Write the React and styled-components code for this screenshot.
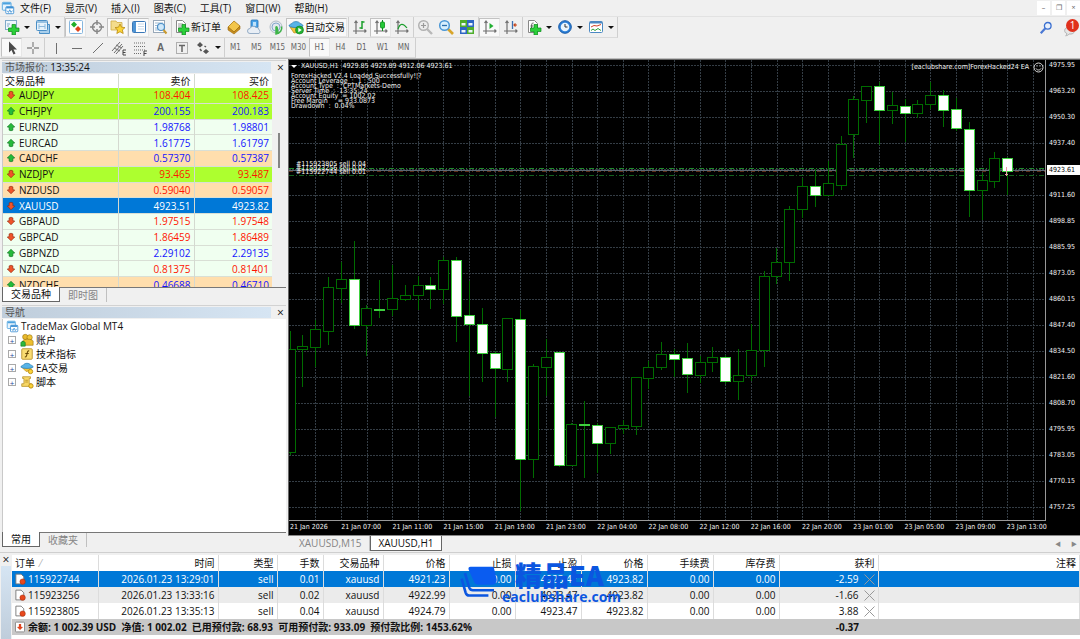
import React, { useState } from 'react';
import styled, { createGlobalStyle, css } from 'styled-components';

const GlobalStyle = createGlobalStyle`
    * {
        box-sizing: border-box;
    }
    body {
        margin: 0;
        background: #f0f0f0;
        color: #111;
        font-family: 'Open Sans', 'Noto Sans CJK SC', sans-serif;
        font-size: 10px;
        line-height: 14px;
    }
    button {
        font: inherit;
        color: inherit;
        border: 0;
        padding: 0;
        margin: 0;
        background: none;
    }
    table {
        border-collapse: collapse;
        table-layout: fixed;
        width: 100%;
    }
    svg {
        display: block;
    }
`;

const GREEN = '#1fae2c';
const RED = '#e0431c';
const GREY = '#6f6f6f';

/* ---------- data ---------- */

const MENU = ['文件(F)', '显示(V)', '插入(I)', '图表(C)', '工具(T)', '窗口(W)', '帮助(H)'];
const PERIODS = ['M1', 'M5', 'M15', 'M30', 'H1', 'H4', 'D1', 'W1', 'MN'];

const QUOTES = [
    { name: 'AUDJPY', bid: '108.404', ask: '108.425', up: false, color: 'red', tone: 'lime' },
    { name: 'CHFJPY', bid: '200.155', ask: '200.183', up: true, color: 'blue', tone: 'lime' },
    { name: 'EURNZD', bid: '1.98768', ask: '1.98801', up: true, color: 'blue', tone: 'mint' },
    { name: 'EURCAD', bid: '1.61775', ask: '1.61797', up: true, color: 'blue', tone: 'mint' },
    { name: 'CADCHF', bid: '0.57370', ask: '0.57387', up: true, color: 'blue', tone: 'peach' },
    { name: 'NZDJPY', bid: '93.465', ask: '93.487', up: false, color: 'red', tone: 'lime' },
    { name: 'NZDUSD', bid: '0.59040', ask: '0.59057', up: false, color: 'red', tone: 'peach' },
    { name: 'XAUUSD', bid: '4923.51', ask: '4923.82', up: false, color: 'white', tone: 'active' },
    { name: 'GBPAUD', bid: '1.97515', ask: '1.97548', up: false, color: 'red', tone: 'mint' },
    { name: 'GBPCAD', bid: '1.86459', ask: '1.86489', up: false, color: 'red', tone: 'mint' },
    { name: 'GBPNZD', bid: '2.29102', ask: '2.29135', up: true, color: 'blue', tone: 'mint' },
    { name: 'NZDCAD', bid: '0.81375', ask: '0.81401', up: false, color: 'red', tone: 'mint' },
    { name: 'NZDCHF', bid: '0.46688', ask: '0.46710', up: true, color: 'blue', tone: 'peach' },
];

const TONES = { lime: '#adff2f', mint: '#f0fff0', peach: '#ffdead', active: '#0078d7' };
const PRICE_COLORS = { red: '#ff1500', blue: '#1414ff', white: '#fff' };

const NAV = [
    { label: '账户', icon: 'accounts' },
    { label: '技术指标', icon: 'fx' },
    { label: 'EA交易', icon: 'expert' },
    { label: '脚本', icon: 'script' },
];

const PRICES = [
    '4975.95', '4963.20', '4950.30', '4937.40', '4923.61', '4911.60', '4898.85', '4885.95', '4873.05',
    '4860.15', '4847.40', '4834.50', '4821.60', '4808.70', '4795.95', '4783.05', '4770.15', '4757.25',
];

const TIMES = [
    '21 Jan 2026', '21 Jan 07:00', '21 Jan 11:00', '21 Jan 15:00', '21 Jan 19:00', '21 Jan 23:00',
    '22 Jan 04:00', '22 Jan 08:00', '22 Jan 12:00', '22 Jan 16:00', '22 Jan 20:00', '23 Jan 01:00',
    '23 Jan 05:00', '23 Jan 09:00', '23 Jan 13:00',
];

const COMMENTS = [
    'ForexHacked V2.4 Loaded Successfully!¦?',
    'Account Leverage  :  1 : 500',
    'Account Type  :  CPTMarkets-Demo',
    'Server Time  :  13:35:24',
    'Account Equity  = 1002.02',
    'Free Margin     = 933.0873',
    'Drawdown  :  0.04%',
];

// high, body top, body bottom, low, down candle
const CANDLES = [
    [271, 289, 392, 394], [275, 286, 289, 326], [260, 269, 287, 306], [217, 227, 271, 284],
    [202, 219, 228, 242], [181, 219, 265, 268, 1], [245, 248, 265, 295], [220, 249, 250, 257, 1],
    [205, 238, 249, 255], [225, 235, 239, 240], [216, 225, 235, 249], [217, 225, 229, 248, 1],
    [197, 200, 229, 243], [197, 200, 256, 281, 1], [221, 255, 264, 335, 1], [248, 264, 293, 321, 1],
    [291, 293, 308, 356, 1], [258, 258, 309, 321], [250, 259, 399, 450, 1], [304, 306, 399, 417],
    [279, 297, 307, 335], [292, 292, 405, 406, 1], [363, 364, 405, 405], [341, 364, 365, 417, 1],
    [363, 365, 383, 412, 1], [367, 367, 383, 393], [360, 365, 368, 373], [317, 317, 366, 374],
    [301, 307, 318, 328], [282, 294, 307, 309], [289, 294, 299, 316, 1], [283, 298, 314, 332, 1],
    [296, 302, 315, 322], [287, 297, 302, 311], [295, 297, 321, 323, 1], [289, 315, 321, 339],
    [264, 290, 315, 320], [211, 216, 290, 306], [188, 202, 216, 223], [146, 149, 202, 220],
    [118, 126, 149, 157], [109, 126, 135, 146, 1], [101, 123, 135, 135], [76, 84, 125, 129],
    [36, 39, 74, 97], [26, 26, 40, 62], [22, 26, 50, 84, 1], [32, 45, 50, 63],
    [39, 46, 53, 81, 1], [40, 44, 53, 57], [22, 35, 44, 48], [30, 35, 50, 66, 1],
    [38, 49, 68, 70, 1], [62, 69, 130, 156, 1], [113, 120, 130, 159], [92, 98, 121, 127],
    [97, 98, 111, 134, 1],
];

const ORDER_COLS = ['订单', '时间', '类型', '手数', '交易品种', '价格', '止损', '止盈', '价格', '手续费', '库存费', '获利', '注释'];
const ORDER_WIDTHS = [86, 120, 59, 46, 60, 66, 66, 66, 66, 66, 66, 99];
const ORDERS = [
    ['115922744', '2026.01.23 13:29:01', 'sell', '0.01', 'xauusd', '4921.23', '0.00', '4923.47', '4923.82', '0.00', '0.00', '-2.59'],
    ['115923256', '2026.01.23 13:33:16', 'sell', '0.02', 'xauusd', '4922.99', '0.00', '4923.47', '4923.82', '0.00', '0.00', '-1.66'],
    ['115923805', '2026.01.23 13:35:13', 'sell', '0.04', 'xauusd', '4924.79', '0.00', '4923.47', '4923.82', '0.00', '0.00', '3.88'],
];

/* ---------- icons ---------- */

const axes = <path d="M4 2v13M1 12h13M2.500 4L4 2l1.500 2M12.500 10.500L14 12l-1.500 1.500" fill="none" stroke="#707070" strokeWidth="1.200" />;
const plus = <path d="M8 5.500h3.500v3.500h3.500v3.500h-3.500V16H8v-3.500H4.500V9H8z" fill="#2ccf3a" stroke="#0a8a1a" strokeWidth=".7" />;

const ICONS = {
    app: (
        <>
            <rect x="1.500" y="1.500" width="10" height="9" rx="1" fill="#e8f4fd" stroke="#4da3df" />
            <path d="M2 3h9" stroke="#4da3df" strokeWidth="2" />
            <rect x="5.500" y="6.500" width="9" height="8" rx="1" fill="#fff" stroke="#3b8fd4" />
            <path d="M6 7.500h8" stroke="#3b8fd4" strokeWidth="2" />
            <path d="M7 11l1.500 2 1.500-3 1.500 3 1.500-2" fill="none" stroke="#3b8fd4" />
        </>
    ),
    newChart: (
        <>
            <rect x="1.500" y="1.500" width="11" height="9" fill="#eef6fc" stroke="#7fa9c8" />
            <path d="M3 5h3M3 7h2" stroke="#7fa9c8" />
            {plus}
        </>
    ),
    profiles: (
        <>
            <path d="M4.500 12.500v2h10v-9h-2" fill="#a9cfec" stroke="#4a8fc6" />
            <rect x="1.500" y="1.500" width="11" height="10" rx="1" fill="#e6f2fb" stroke="#4a8fc6" />
            <path d="M2 3h10" stroke="#4a8fc6" />
            <path d="M4 5v5M4 7.500h6M10 5v5" fill="none" stroke="#8cb9dc" />
        </>
    ),
    watch: (
        <>
            <rect x="1.500" y="1.500" width="13" height="13" rx="1" fill="#fff" stroke="#86b6de" />
            <path d="M6 2.500l3 3-3 3-3-3z" fill={GREEN} />
            <path d="M10 7l3 3-3 3-3-3z" fill={RED} />
        </>
    ),
    target: (
        <>
            <circle cx="8" cy="8" r="4.500" fill="none" stroke="#888" strokeWidth="1.500" />
            <path d="M8 1v5M8 10v5M1 8h5M10 8h5" stroke="#888" strokeWidth="1.500" />
        </>
    ),
    star: (
        <>
            <path d="M1 2h5l1 1.500h5V11H1z" fill="#f4dc8c" stroke="#d0ac45" strokeWidth=".8" />
            <path d="M10 5l1.500 3.200 3.500.4-2.600 2.300.8 3.600L10 12.700l-3.200 1.800.8-3.600L5 8.600l3.500-.4z" fill="#fbd437" stroke="#b98a12" strokeWidth=".8" />
        </>
    ),
    panel: (
        <>
            <rect x="1.500" y="2.500" width="13" height="11" rx="1" fill="#fff" stroke="#3a78b8" />
            <path d="M2 3h3v10H2z" fill="#4f94d4" />
            <path d="M7 5h6M7 7.500h6M7 10h6" stroke="#c5d8ea" />
        </>
    ),
    tester: (
        <>
            <rect x="1.500" y="1.500" width="11" height="12" fill="#fff" stroke="#98a8b8" />
            <path d="M3 4h8M3 6.500h3M3 9h2M3 11h3" stroke="#9db9d1" />
            <circle cx="9" cy="8" r="3.500" fill="#cfe8fa" stroke="#4c8fc7" strokeWidth="1.200" />
            <path d="M11.500 11l3 3.500" stroke="#c99a2e" strokeWidth="2" />
        </>
    ),
    newOrder: (
        <>
            <path d="M2.500 1.500h6l3 3v9h-9z" fill="#fff" stroke="#888" />
            <path d="M4 5h5M4 7h6M4 9h3" stroke="#999" />
            {plus}
        </>
    ),
    gold: (
        <>
            <path d="M2 8l6-6 6 5-6 6z" fill="#f3c64b" stroke="#b07c14" strokeWidth=".8" />
            <path d="M2 8l6 5 6-6v3l-6 5-6-4z" fill="#c98f1c" stroke="#9a6a10" strokeWidth=".6" />
        </>
    ),
    cloud: (
        <>
            <rect x="4" y="1" width="7" height="8" rx="1" fill="#4aa3e8" stroke="#2470b4" strokeWidth=".8" />
            <path d="M6 3h3v4H6z" fill="#bfe2fb" />
            <path d="M3 14.500a2.500 2.500 0 010-5 3.500 3.500 0 016-1 2.500 2.500 0 013 2.500 2 2 0 010 3.500z" fill="#e8eef5" stroke="#7f9cba" strokeWidth=".8" />
        </>
    ),
    signal: (
        <>
            <circle cx="8" cy="8" r="6" fill="#e2e8ee" stroke="#b3bdc8" />
            <circle cx="8" cy="8" r="4" fill="none" stroke="#86a8cc" />
            <path d="M8 7a2 2 0 012 2l1 6H8z" fill="#3fb54a" />
            <path d="M8 7.500V15c4-.500 6.500-4 5.500-7.500" fill="none" stroke="#3fb54a" strokeWidth="1.500" />
        </>
    ),
    auto: (
        <>
            <path d="M2 8l4 6 6-1 2-5z" fill="#f2c33c" stroke="#b98a12" strokeWidth=".7" />
            <path d="M1 7c0-1.500 2-2 3-2.500C5 2 11 2 12 4.500c1.500.500 3 1 3 2.500-3 2-11 2-14 0z" fill="#58b4e8" stroke="#2d7fb5" strokeWidth=".8" />
            <circle cx="11.500" cy="11" r="4" fill="#23b233" stroke="#0d7a1b" strokeWidth=".6" />
            <path d="M10.300 8.800l3.500 2.200-3.500 2.200z" fill="#fff" />
        </>
    ),
    bars: (
        <>
            {axes}
            <path d="M10 2v8M10 3h2.500M7.500 9H10" stroke="#1b9e2c" strokeWidth="1.500" />
        </>
    ),
    candle: (
        <>
            {axes}
            <path d="M9.500 1v11" stroke="#0b8a1b" />
            <rect x="7.500" y="3" width="4" height="6" rx="1" fill="#25c937" stroke="#0b8a1b" strokeWidth=".8" />
        </>
    ),
    line: (
        <>
            {axes}
            <path d="M4 10c2-6 5-6 9-1" fill="none" stroke="#1b9e2c" strokeWidth="1.200" />
        </>
    ),
    zoomIn: (
        <>
            <circle cx="6.500" cy="6.500" r="4.800" fill="#ececec" stroke="#b0b0b0" strokeWidth="1.400" />
            <path d="M4 6.500h5M6.500 4v5" stroke="#999" strokeWidth="1.200" />
            <path d="M10 10l5 5" stroke="#b8b8b8" strokeWidth="2.400" />
        </>
    ),
    zoomOut: (
        <>
            <path d="M10 10l5 5" stroke="#d8a52a" strokeWidth="2.600" />
            <circle cx="6.500" cy="6.500" r="4.800" fill="#d7effd" stroke="#4a97d6" strokeWidth="1.500" />
            <path d="M4 6.500h5" stroke="#2a6fae" strokeWidth="1.300" />
        </>
    ),
    tile: (
        <>
            <rect x="1" y="1" width="7" height="7" fill="#4fae2b" />
            <rect x="8" y="1" width="7" height="7" fill="#2f66c4" />
            <rect x="1" y="8" width="7" height="7" fill="#2f66c4" />
            <rect x="8" y="8" width="7" height="7" fill="#4fae2b" />
            <path d="M2.500 4h4v2.500h-4zM9.500 4h4v2.500h-4zM2.500 11h4v2.500h-4zM9.500 11h4v2.500h-4z" fill="#eef6fb" />
        </>
    ),
    scroll: (
        <>
            {axes}
            <path d="M7.500 4l4 3-4 3z" fill="#22b032" />
        </>
    ),
    shift: (
        <>
            {axes}
            <path d="M9.500 2v8" stroke="#3b6fb0" strokeWidth="1.300" />
            <path d="M14 6h-3M12.500 4.500L11 6l1.500 1.500" fill="none" stroke="#c5481f" strokeWidth="1.200" />
        </>
    ),
    indicators: (
        <>
            <path d="M2.500 1.500h6l3 3v9h-9z" fill="#fff" stroke="#888" />
            <path d="M7.500 4c-2 0-2 1-2 7M4.500 7H7" fill="none" stroke="#555" />
            {plus}
        </>
    ),
    clock: (
        <>
            <circle cx="8" cy="8" r="6.300" fill="#2b7fd8" stroke="#1a5ba6" />
            <circle cx="8" cy="8" r="4.300" fill="#eaf5fd" />
            <path d="M8 5v3h2.500" fill="none" stroke="#333" />
        </>
    ),
    template: (
        <>
            <rect x="1.500" y="2.500" width="13" height="11" rx="1" fill="#fff" stroke="#4b88c2" />
            <path d="M2 3.500h12" stroke="#4b88c2" strokeWidth="2" />
            <path d="M3 8l3-1.500 3 .500 4-1.500" fill="none" stroke="#d0432a" />
            <path d="M3 11.500l2-1.500 2 1.500 3-2 3 2" fill="none" stroke="#2ea33b" />
        </>
    ),
    cursor: <path d="M5 1.500v11l2.500-2.500 2 4.500 2-1-2-4h3.500z" fill="#4a4a4a" />,
    cross: <path d="M8 2v5M8 9v5M2 8h5M9 8h5" stroke="#8a8a8a" strokeWidth="1.300" />,
    vline: <path d="M8.500 3v11" stroke={GREY} />,
    hline: <path d="M3 8.500h10" stroke={GREY} />,
    trend: <path d="M3 13L13 3" stroke={GREY} />,
    channel: (
        <>
            <path d="M1 11L9 2M3 13l8-9M5 14l7-8M3 8l6 3M5 5l6 3" stroke={GREY} fill="none" />
            <path d="M15 10h-3v5h3M12 12.500h2.500" stroke="#444" fill="none" />
        </>
    ),
    fibo: (
        <>
            <path d="M2 3h12M2 6.500h12M2 10h12M2 13.500h7" stroke={GREY} strokeDasharray="1 1" />
            <path d="M15 11h-3v5M12 13.500h2.500" stroke="#444" fill="none" />
        </>
    ),
    label: (
        <>
            <rect x="2.500" y="2.500" width="11" height="11" fill="none" stroke={GREY} strokeDasharray="1 1" />
            <path d="M5 5.500h6M8 5.500V12" stroke="#666" strokeWidth="1.500" />
        </>
    ),
    arrows: (
        <>
            <path d="M5 2l3 3-3 2.500L2 5zM11 9l3 2.500-3 2.500-3-2.500z" fill="#555" />
            <path d="M5 9l1.500 2M9.500 6L11 7" stroke="#555" strokeWidth="1.500" />
        </>
    ),
    search: (
        <>
            <circle cx="10" cy="5.500" r="3.800" fill="#e8f0fc" stroke="#3a6fd0" strokeWidth="1.500" />
            <path d="M7 8.500l-5 5.500" stroke="#4a78d4" strokeWidth="2.500" />
        </>
    ),
    chat: <path d="M3 14.500c1-.500 1.500-1.500 1.500-2.500C1 11 1 6 5 5c5-1 8 1 8 4s-3 4-6 3.500c-1 1.500-2.500 2-4 2z" fill="#e6e6e6" stroke="#a8a8a8" />,
    accounts: (
        <>
            <circle cx="6" cy="4.500" r="3" fill="#e9b92c" stroke="#9a7410" strokeWidth=".7" />
            <circle cx="11" cy="5" r="3" fill="#f0c638" stroke="#9a7410" strokeWidth=".7" />
            <path d="M3 14V9c2-2.500 10-2.500 12 0v5z" fill="#edbf2f" stroke="#9a7410" strokeWidth=".7" />
            <path d="M1 15v-4c1-2 4-2 5 0v4z" fill="#2db83b" stroke="#14771f" strokeWidth=".7" />
        </>
    ),
    fx: (
        <>
            <rect x="2" y="2" width="12" height="12" rx="1" fill="#f9dc72" stroke="#b8912a" />
            <path d="M10.500 4.500C8 4 8.500 7 7.500 10c-.400 1.500-1 1.500-2 1.500M6 7.500h4" fill="none" stroke="#6b4b08" strokeWidth="1.200" />
        </>
    ),
    expert: (
        <>
            <path d="M3 8l4 4 5-1 1-4z" fill="#f2c33c" stroke="#b98a12" strokeWidth=".7" />
            <path d="M1 7c0-1.500 2-2 3-2.500C5 2 11 2 12 4.500c1.500.500 3 1 3 2.500-3 2-11 2-14 0z" fill="#58b4e8" stroke="#2d7fb5" strokeWidth=".8" />
            <circle cx="12" cy="12" r="2.500" fill="#fbd437" stroke="#b98a12" />
        </>
    ),
    script: (
        <>
            <path d="M3 2h9v2h-1.500v6H13v3H2v-3h2.500V4H3z" fill="#f7d766" stroke="#b8912a" strokeWidth=".9" />
            <path d="M6 6h3M6 8h3" stroke="#b8912a" />
            <circle cx="12.500" cy="12.500" r="2.500" fill="#fbd437" stroke="#b98a12" />
        </>
    ),
    up: <path d="M8 2l6 6-3 .500v4.500L8 14l-3-1V8.500L2 8z" fill="#25bb3a" stroke="#0c6b1b" />,
    down: <path d="M8 14L2 8l3-.500V3l3-1 3 1v4.500l3 .500z" fill="#ef5429" stroke="#8d2408" />,
    order: (
        <>
            <path d="M2.500 1.500h7l3.500 3.500v9.500H2.500z" fill="#fff" stroke="#777" strokeWidth="1.200" />
            <circle cx="11.500" cy="11.500" r="3.600" fill="#e8481d" stroke="#a02c0c" strokeWidth=".7" />
        </>
    ),
    balance: (
        <>
            <rect x="2" y="1.500" width="12" height="13" rx="1" fill="#fff" stroke="#888" strokeWidth="1.200" />
            <path d="M8 12L4 8l2.500-.500V4h3v3.500L12 8z" fill={RED} />
        </>
    ),
};

const Icon = ({ name, size = 16 }) => (
    <svg width={size} height={size} viewBox="0 0 16 16" aria-hidden="true">
        {ICONS[name]}
    </svg>
);

/* ---------- shell ---------- */

const Shell = styled.div`
    min-height: 100vh;
    display: flex;
    flex-direction: column;
    overflow: hidden;
`;

const MenuBar = styled.nav`
    display: flex;
    align-items: center;
    height: 17px;
    padding-left: 1px;
    border-bottom: 1px solid #e2e2e2;
`;

const MenuItem = styled.button`
    padding: 0 7px;
    line-height: 16px;
    white-space: nowrap;
    &:first-of-type {
        padding-left: 5px;
    }
`;

const WindowButtons = styled.div`
    display: flex;
    gap: 2px;
    margin-left: auto;
`;

const WindowButton = styled.button`
    width: 13px;
    height: 14px;
    background: #fff;
    color: #666;
    font-size: 7px;
    line-height: 14px;
`;

const ToolRow = styled.div`
    display: flex;
    height: ${(p) => (p.$last ? 20 : 21)}px;
    padding-left: 1px;
`;

const ToolGroup = styled.div`
    display: flex;
    align-items: center;
    padding-right: 1px;
    border-right: 1px solid #cfcfcf;
    border-bottom: 1px solid #dadada;
`;

const ToolButton = styled.button`
    display: flex;
    align-items: center;
    justify-content: center;
    gap: 1px;
    min-width: ${(p) => (p.$wide ? 31 : 21)}px;
    height: 19px;
    padding: 0 1px;
    white-space: nowrap;
    border: 1px solid transparent;
    ${(p) =>
        p.$pressed &&
        css`
            background: #f9f9f9;
            border-color: #c2c2c2 #e6e6e6 #e6e6e6 #c2c2c2;
        `}
`;

const PeriodButton = styled(ToolButton)`
    padding: 0;
    color: #666;
    font-family: 'DejaVu Sans Condensed', 'DejaVu Sans', sans-serif;
    font-size: 8px;
`;

const TextTool = styled.span`
    color: #666;
    font-weight: 700;
    font-family: 'Liberation Sans', sans-serif;
`;

const Caret = styled.span`
    margin-left: 3px;
    border: 3px solid transparent;
    border-top-color: #111;
    border-bottom: 0;
`;

const RightTools = styled.div`
    display: flex;
    align-items: center;
    gap: 10px;
    margin-left: auto;
    padding-right: 3px;
`;

const Bell = styled.button`
    position: relative;
    padding-top: 4px;
`;

const Badge = styled.span`
    position: absolute;
    top: 0;
    right: -2px;
    width: 13px;
    height: 13px;
    border-radius: 50%;
    background: #e0301c;
    color: #fff;
    line-height: 13px;
    text-align: center;
`;

const Workspace = styled.main`
    flex: 1;
    display: grid;
    grid-template-columns: 288px 1fr;
    border-top: 1px solid #bdbdbd;
`;

/* ---------- side panels ---------- */

const Side = styled.aside`
    display: flex;
    flex-direction: column;
    gap: 2px;
    padding: 1px 2px 4px;
`;

const Panel = styled.section`
    display: flex;
    flex-direction: column;
    flex: ${(p) => (p.$grow ? 1 : 'none')};
    border-top: 1px solid #d2d2d2;
    padding-top: 1px;
`;

const PanelTitle = styled.header`
    display: flex;
    justify-content: space-between;
    height: 12px;
    padding-right: 2px;
    line-height: 11px;
`;

const PanelName = styled.h2`
    flex: 1;
    margin: 0 6px 1px 0;
    padding-left: 3px;
    background: linear-gradient(90deg, #bfcddb, #d6e5f3);
    color: #555;
    font-size: 10px;
    font-weight: 400;
    time {
        color: #111;
    }
`;

const CloseButton = styled.button`
    font-size: 12px;
    line-height: 10px;
    width: 7px;
`;

const QuoteArea = styled.div`
    display: flex;
    height: 214px;
    overflow: hidden;
    border-left: 1px solid #c9c9c9;
    border-bottom: 1px solid #777;
`;

const QuoteTable = styled.table`
    width: calc(100% - 14px);
    height: 219px;
    th,
    td {
        padding: 0 3px;
        line-height: 14px;
        text-align: right;
        font-weight: 400;
        border-right: 1px solid #d4d9d0;
    }
    th {
        background: #fff;
    }
    th:first-child {
        text-align: left;
        padding-left: 2px;
    }
    th:last-child,
    td:last-child {
        border-right: 0;
    }
`;

const QuoteRow = styled.tr`
    background: ${(p) => TONES[p.$tone]};
    border-bottom: 1px solid #d9dfd5;
    color: ${(p) => PRICE_COLORS[p.$color]};
`;

const Symbol = styled.div`
    display: flex;
    align-items: center;
    gap: 3px;
    color: ${(p) => (p.$active ? '#fff' : '#111')};
`;

const ScrollTrack = styled.div`
    flex: 1;
    padding: 59px 6px 0;
`;

const ScrollThumb = styled.div`
    width: 2px;
    height: 35px;
    background: #858585;
`;

const Tabs = styled.div`
    display: flex;
    height: 15px;
`;

const Tab = styled.button`
    padding: 0 8px;
    height: 14px;
    line-height: 13px;
    color: ${(p) => (p.$active ? '#111' : '#858585')};
    ${(p) =>
        p.$active
            ? css`
                  margin-top: -1px;
                  height: 15px;
                  background: #fff;
                  border: 1px solid #666;
                  border-top: 0;
              `
            : css`
                  border-right: 1px solid #c0c0c0;
              `}
`;

const Tree = styled.ul`
    flex: 1;
    margin: 0;
    padding: 0 3px;
    list-style: none;
    background: #fff;
    border-left: 1px solid #c9c9c9;
    border-bottom: 1px solid #777;
`;

const TreeItem = styled.li`
    display: flex;
    align-items: center;
    gap: 2px;
    height: 14px;
    padding-left: ${(p) => (p.$root ? 0 : 2)}px;
    & > svg {
        margin-left: ${(p) => (p.$root ? 0 : 2)}px;
    }
`;

const Expander = styled.button`
    width: 8px;
    height: 8px;
    border: 1px solid #a9a9a9;
    color: #2a4c9c;
    font-size: 8px;
    line-height: 5px;
`;

/* ---------- chart ---------- */

const ChartColumn = styled.section`
    display: flex;
    flex-direction: column;
    min-width: 0;
`;

const ChartGrid = styled.div`
    flex: 1;
    display: grid;
    grid-template: 1fr 14px / 1fr 34px;
    background: #000;
    color: #f2f2f2;
    border-top: 1px solid #666;
    border-left: 1px solid #666;
    font-family: 'DejaVu Sans Condensed', 'DejaVu Sans', 'Noto Sans CJK SC', sans-serif;
    font-size: 7px;
    white-space: pre;
`;

const Plot = styled.div`
    position: relative;
    min-height: 461px;
    border-right: 1px solid #999;
    border-bottom: 1px solid #999;
`;

const ChartSvg = styled.svg`
    position: absolute;
    inset: 0;
    width: 100%;
    height: 100%;
`;

const ChartHeading = styled.div`
    position: absolute;
    top: 2px;
    left: 2px;
    display: flex;
    align-items: center;
    gap: 4px;
    line-height: 9px;
`;

const HeadingCaret = styled.span`
    border: 3px solid transparent;
    border-top-color: #fff;
    border-bottom: 0;
`;

const ExpertName = styled(ChartHeading)`
    left: auto;
    right: 1px;
`;

const Notes = styled.div`
    position: absolute;
    top: ${(p) => p.$top}px;
    left: ${(p) => p.$left}px;
    line-height: ${(p) => p.$leading}px;
`;

const PriceAxis = styled.div`
    grid-row: span 2;
    overflow: hidden;
    padding-left: 1px;
    line-height: 26px;
`;

const PriceLabel = styled.div`
    height: 26px;
    padding-left: 2px;
    &:first-child {
        margin-top: -8px;
    }
`;

const PriceTag = styled.div`
    height: 26px;
    padding: 9px 0 7px;
    span {
        display: block;
        padding-left: 2px;
        background: #fff;
        color: #000;
        line-height: 10px;
    }
`;

const TimeAxis = styled.div`
    display: grid;
    grid-template-columns: repeat(15, 1fr);
    margin-right: -12px;
    padding-left: 1px;
    line-height: 12px;
`;

const ChartTabs = styled.div`
    display: flex;
    height: 17px;
    padding-right: 3px;
    border-top: 1px solid #888;
`;

const ChartTab = styled(Tab)`
    height: 15px;
    line-height: 15px;
    padding: 0 7px;
    margin-top: 0;
    &:first-child {
        padding: 0 8px 0 11px;
    }
`;

const TabScroll = styled.div`
    display: flex;
    gap: 10px;
    margin-left: auto;
    color: #888;
    font-size: 6px;
`;

/* ---------- terminal ---------- */

const Terminal = styled.section`
    position: relative;
    display: flex;
    min-height: 87px;
    padding-top: 2px;
    border-top: 1px solid #cfcfcf;
`;

const Gutter = styled.div`
    width: 12px;
    padding: 0 1px;
    display: flex;
    flex-direction: column;
    align-items: center;
`;

const GutterStrip = styled.div`
    flex: 1;
    align-self: stretch;
    margin-top: 1px;
    background: linear-gradient(#d6e5f3, #bfcddb);
`;

const OrderArea = styled.div`
    flex: 1;
    min-width: 0;
    background: #fff;
`;

const OrderTable = styled.table`
    th,
    td {
        height: 16px;
        padding: 0 3px;
        line-height: 14px;
        text-align: right;
        font-weight: 400;
        white-space: pre;
    }
    th,
    tbody td {
        border-right: 1px solid #dcdcdc;
    }
    th:first-child {
        text-align: left;
    }
    td:first-child {
        padding-left: 2px;
    }
`;

const SortMark = styled.span`
    margin-left: 5px;
    color: #aaa;
`;

const OrderRow = styled.tr`
    background: ${(p) => (p.$active ? '#0078d7' : p.$odd ? '#ebebeb' : '#fff')};
    color: ${(p) => (p.$active ? '#fff' : '#111')};
`;

const IconCell = styled.div`
    display: flex;
    align-items: center;
    gap: 2px;
`;

const Profit = styled.div`
    display: flex;
    align-items: center;
    justify-content: flex-end;
    gap: 5px;
`;

const SummaryRow = styled.tr`
    background: #c8c8c8;
    && td {
        font-weight: 700;
    }
    && td:nth-child(2) {
        padding-right: 19px;
    }
`;

const Brand = styled.div`
    position: absolute;
    left: 460px;
    top: 7px;
    display: flex;
    color: #0b56e0;
    pointer-events: none;
`;

const BrandLogo = styled.svg`
    margin-top: 6px;
    flex: none;
`;

const BrandText = styled.div`
    margin-left: 5px;
    font-size: 14px;
    line-height: 14px;
    font-weight: 700;
    strong {
        display: block;
        padding-left: 13px;
        font-family: 'Noto Sans CJK SC', sans-serif;
        font-size: 27px;
        line-height: 30px;
    }
`;

const Tool = ({ icon, label, text, pressed, caret }) => (
    <ToolButton $pressed={pressed} $wide={caret} aria-label={label} title={label}>
        <Icon name={icon} />
        {text}
        {caret && <Caret />}
    </ToolButton>
);

function Toolbars() {
    const [period, setPeriod] = useState('H1');
    return (
        <>
            <ToolRow>
                <ToolGroup>
                    <Tool icon="newChart" label="新图表" caret />
                    <Tool icon="profiles" label="配置" caret />
                </ToolGroup>
                <ToolGroup>
                    <Tool icon="watch" label="市场报价" pressed />
                    <Tool icon="target" label="数据窗口" />
                    <Tool icon="star" label="导航" pressed />
                    <Tool icon="panel" label="终端" pressed />
                    <Tool icon="tester" label="策略测试" />
                </ToolGroup>
                <ToolGroup>
                    <Tool icon="newOrder" label="新订单" text="新订单" />
                    <Tool icon="gold" label="编辑器" />
                    <Tool icon="cloud" label="社区" />
                    <Tool icon="signal" label="信号" />
                    <Tool icon="auto" label="自动交易" text="自动交易" pressed />
                </ToolGroup>
                <ToolGroup>
                    <Tool icon="bars" label="柱状图" />
                    <Tool icon="candle" label="阴阳烛" pressed />
                    <Tool icon="line" label="折线图" />
                </ToolGroup>
                <ToolGroup>
                    <Tool icon="zoomIn" label="放大" />
                    <Tool icon="zoomOut" label="缩小" />
                    <Tool icon="tile" label="平铺窗口" />
                </ToolGroup>
                <ToolGroup>
                    <Tool icon="scroll" label="自动滚动" pressed />
                    <Tool icon="shift" label="图表平移" />
                </ToolGroup>
                <ToolGroup>
                    <Tool icon="indicators" label="指标" caret />
                    <Tool icon="clock" label="周期" caret />
                    <Tool icon="template" label="模板" caret />
                </ToolGroup>
                <RightTools>
                    <button aria-label="搜索">
                        <Icon name="search" size={14} />
                    </button>
                    <Bell aria-label="消息">
                        <Icon name="chat" size={14} />
                        <Badge>1</Badge>
                    </Bell>
                </RightTools>
            </ToolRow>
            <ToolRow $last>
                <ToolGroup>
                    <Tool icon="cursor" label="光标" pressed />
                    <Tool icon="cross" label="十字准线" />
                </ToolGroup>
                <ToolGroup>
                    <Tool icon="vline" label="垂直线" />
                    <Tool icon="hline" label="水平线" />
                    <Tool icon="trend" label="趋势线" />
                    <Tool icon="channel" label="通道" />
                    <Tool icon="fibo" label="斐波那契" />
                    <ToolButton aria-label="文字">
                        <TextTool>A</TextTool>
                    </ToolButton>
                    <Tool icon="label" label="文字标签" />
                    <Tool icon="arrows" label="箭头" caret />
                </ToolGroup>
                <ToolGroup>
                    {PERIODS.map((p) => (
                        <PeriodButton key={p} $pressed={p === period} onClick={() => setPeriod(p)}>
                            {p}
                        </PeriodButton>
                    ))}
                </ToolGroup>
            </ToolRow>
        </>
    );
}

function MarketWatch() {
    return (
        <Panel>
            <PanelTitle>
                <PanelName>
                    市场报价: <time>13:35:24</time>
                </PanelName>
                <CloseButton aria-label="关闭市场报价">×</CloseButton>
            </PanelTitle>
            <QuoteArea>
                <QuoteTable>
                    <colgroup>
                        <col width="115" />
                        <col width="76" />
                        <col />
                    </colgroup>
                    <thead>
                        <tr>
                            <th>交易品种</th>
                            <th>卖价</th>
                            <th>买价</th>
                        </tr>
                    </thead>
                    <tbody>
                        {QUOTES.map((q) => (
                            <QuoteRow key={q.name} $tone={q.tone} $color={q.color}>
                                <td>
                                    <Symbol $active={q.tone === 'active'}>
                                        <Icon name={q.up ? 'up' : 'down'} size={10} />
                                        {q.name}
                                    </Symbol>
                                </td>
                                <td>{q.bid}</td>
                                <td>{q.ask}</td>
                            </QuoteRow>
                        ))}
                    </tbody>
                </QuoteTable>
                <ScrollTrack>
                    <ScrollThumb />
                </ScrollTrack>
            </QuoteArea>
            <Tabs>
                <Tab $active>交易品种</Tab>
                <Tab>即时图</Tab>
            </Tabs>
        </Panel>
    );
}

function Navigator() {
    return (
        <Panel $grow>
            <PanelTitle>
                <PanelName>导航</PanelName>
                <CloseButton aria-label="关闭导航">×</CloseButton>
            </PanelTitle>
            <Tree>
                <TreeItem $root>
                    <Icon name="app" size={13} />
                    TradeMax Global MT4
                </TreeItem>
                {NAV.map((n) => (
                    <TreeItem key={n.label}>
                        <Expander aria-label={`展开${n.label}`}>+</Expander>
                        <Icon name={n.icon} size={14} />
                        {n.label}
                    </TreeItem>
                ))}
            </Tree>
            <Tabs>
                <Tab $active>常用</Tab>
                <Tab>收藏夹</Tab>
            </Tabs>
        </Panel>
    );
}

function PriceChart() {
    const step = 12.815;
    const columns = Array.from({ length: 29 }, (_, i) => Math.round(26.3 + i * step * 2) + 0.5);
    const rows = Array.from({ length: 18 }, (_, i) => Math.round(4.5 + i * 26) + 0.5);
    return (
        <ChartSvg shapeRendering="crispEdges">
            <g stroke="#343d45" strokeDasharray="2 1">
                {columns.map((x) => (
                    <line key={x} x1={x} x2={x} y1="0" y2="100%" />
                ))}
                {rows.map((y) => (
                    <line key={y} x1="0" x2="100%" y1={y} y2={y} />
                ))}
            </g>
            <line x1="0" x2="100%" y1="110.5" y2="110.5" stroke="#5c6873" />
            <line x1="0" x2="100%" y1="111.5" y2="111.5" stroke="#5a2c16" strokeDasharray="4 3 1 3" />
            <line x1="0" x2="100%" y1="108.5" y2="108.5" stroke="#1f8a2c" strokeDasharray="5 2 1 2" />
            <line x1="0" x2="100%" y1="115.5" y2="115.5" stroke="#14601d" strokeDasharray="5 2 1 2" />
            {CANDLES.map(([high, top, bottom, low, down], i) => {
                const x = Math.round(0.5 + i * step);
                return (
                    <g key={i} stroke={down ? '#3fcf3f' : '#006c00'}>
                        <line x1={x + 0.5} x2={x + 0.5} y1={high} y2={low + 1} stroke="#006c00" />
                        <rect
                            x={x - 4.5}
                            y={top + 0.5}
                            width="10"
                            height={Math.max(bottom - top, 0)}
                            fill={down ? '#fff' : '#000'}
                        />
                    </g>
                );
            })}
            <path d="M717.500 107v9M716 114.500h3" stroke="#e8a0a8" fill="none" />
        </ChartSvg>
    );
}

function ChartWindow() {
    return (
        <ChartColumn>
            <ChartGrid>
                <Plot>
                    <PriceChart />
                    <ChartHeading>
                        <HeadingCaret />
                        XAUUSD,H1  4929.85 4929.89 4912.06 4923.61
                    </ChartHeading>
                    <ExpertName>
                        [eaclubshare.com]ForexHacked24 EA
                        <svg width="11" height="11" viewBox="0 0 11 11" fill="none" stroke="#ddd">
                            <circle cx="5.5" cy="5.5" r="4.5" />
                            <path d="M3 6.500c1 2 4 2 5 0M4 3.500v1M7 3.500v1" />
                        </svg>
                    </ExpertName>
                    <Notes $top={14} $left={2} $leading={5}>
                        {COMMENTS.join('\n')}
                    </Notes>
                    <Notes $top={102} $left={7} $leading={4}>
                        {'#115923805 sell 0.04\n#115923256 sell 0.02\n#115922744 sell 0.01'}
                    </Notes>
                </Plot>
                <PriceAxis>
                    {PRICES.map((p, i) =>
                        i === 4 ? (
                            <PriceTag key={p}>
                                <span>{p}</span>
                            </PriceTag>
                        ) : (
                            <PriceLabel key={p}>{p}</PriceLabel>
                        )
                    )}
                </PriceAxis>
                <TimeAxis>
                    {TIMES.map((t) => (
                        <span key={t}>{t}</span>
                    ))}
                </TimeAxis>
            </ChartGrid>
            <ChartTabs>
                <ChartTab>XAUUSD,M15</ChartTab>
                <ChartTab $active>XAUUSD,H1</ChartTab>
                <TabScroll>
                    <button aria-label="向左">◀</button>
                    <button aria-label="向右">▶</button>
                </TabScroll>
            </ChartTabs>
        </ChartColumn>
    );
}

function OrdersPanel() {
    return (
        <Terminal>
            <Gutter>
                <CloseButton aria-label="关闭终端">×</CloseButton>
                <GutterStrip />
            </Gutter>
            <OrderArea>
                <OrderTable>
                    <colgroup>
                        {ORDER_WIDTHS.map((w, i) => (
                            <col key={i} width={w} />
                        ))}
                        <col />
                    </colgroup>
                    <thead>
                        <tr>
                            {ORDER_COLS.map((c, i) => (
                                <th key={i}>
                                    {c}
                                    {i === 0 && <SortMark>⁄</SortMark>}
                                </th>
                            ))}
                        </tr>
                    </thead>
                    <tbody>
                        {ORDERS.map((o, row) => (
                            <OrderRow key={o[0]} $active={row === 0} $odd={row % 2 === 1}>
                                <td>
                                    <IconCell>
                                        <Icon name="order" size={12} />
                                        {o[0]}
                                    </IconCell>
                                </td>
                                {o.slice(1, 11).map((v, i) => (
                                    <td key={i}>{v}</td>
                                ))}
                                <td>
                                    <Profit>
                                        {o[11]}
                                        <button aria-label={`平仓 ${o[0]}`}>
                                            <svg width="11" height="11" viewBox="0 0 11 11">
                                                <path d="M.5.500l10 10M10.500.500l-10 10" stroke="#999" />
                                            </svg>
                                        </button>
                                    </Profit>
                                </td>
                                <td />
                            </OrderRow>
                        ))}
                    </tbody>
                    <tfoot>
                        <SummaryRow>
                            <td colSpan="11">
                                <IconCell>
                                    <Icon name="balance" size={12} />
                                    余额: 1 002.39 USD  净值: 1 002.02  已用预付款: 68.93  可用预付款: 933.09  预付款比例: 1453.62%
                                </IconCell>
                            </td>
                            <td>-0.37</td>
                            <td />
                        </SummaryRow>
                    </tfoot>
                </OrderTable>
            </OrderArea>
            <Brand>
                <BrandLogo width="37" height="32" viewBox="30 44 112 96" fill="none" stroke="#0b56e0" strokeWidth="8">
                    <path d="M35 82l12 42q3 9 11 9h58" />
                    <path d="M45 65l13 44q3 8 11 8h64" />
                    <path d="M62 46h66q4 0 5 4l8 36q-1 12-11 14H84q-8 0-11-7L56 54q-2-8 6-8z" fill="#0a5cf0" stroke="none" />
                </BrandLogo>
                <BrandText>
                    <strong>精品EA</strong>
                    eaclubshare.com
                </BrandText>
            </Brand>
        </Terminal>
    );
}

function App() {
    return (
        <Shell>
            <GlobalStyle />
            <MenuBar>
                <Icon name="app" size={14} />
                {MENU.map((m) => (
                    <MenuItem key={m}>{m}</MenuItem>
                ))}
                <WindowButtons>
                    <WindowButton aria-label="最小化">–</WindowButton>
                    <WindowButton aria-label="还原">❐</WindowButton>
                    <WindowButton aria-label="关闭">×</WindowButton>
                </WindowButtons>
            </MenuBar>
            <Toolbars />
            <Workspace>
                <Side>
                    <MarketWatch />
                    <Navigator />
                </Side>
                <ChartWindow />
            </Workspace>
            <OrdersPanel />
        </Shell>
    );
}

export default App;
